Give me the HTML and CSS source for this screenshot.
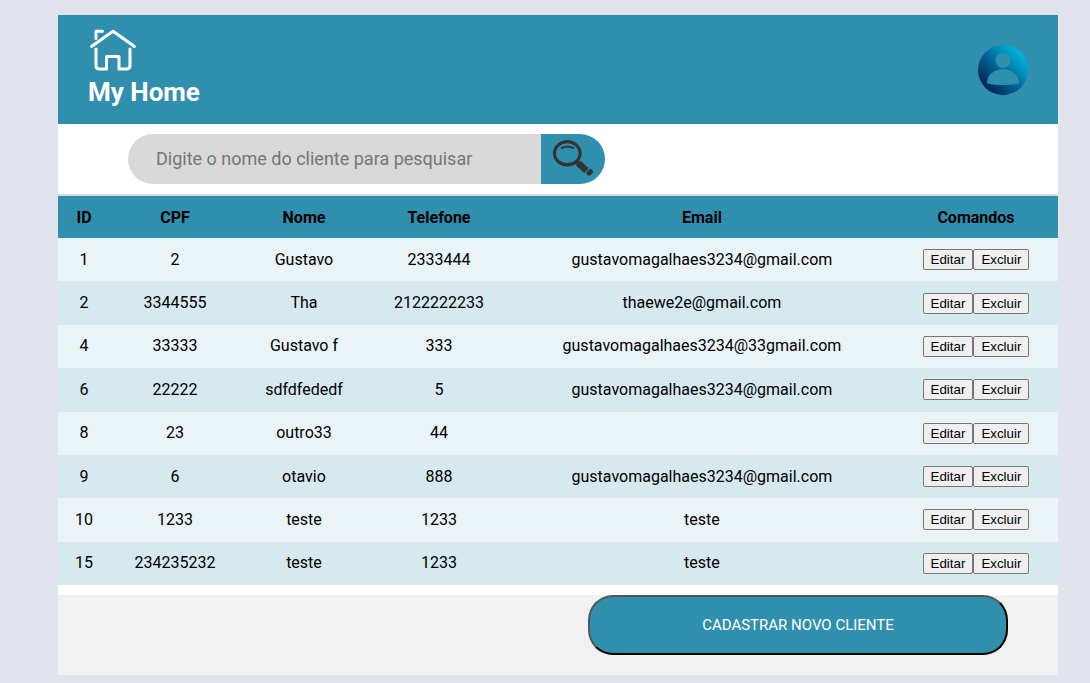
FILE: index.html
```html
<!DOCTYPE html>
<html lang="pt-BR">
<head>
<meta charset="utf-8">
<meta name="viewport" content="width=device-width, initial-scale=1">
<title>My Home</title>
<link rel="stylesheet" href="styles.css">
</head>
<body>
<div class="page">
  <header class="header">
    <div class="brand">
      <svg class="brand-icon" viewBox="0 0 48 44" fill="none" stroke="#fff" stroke-width="3" stroke-linecap="round" stroke-linejoin="round" aria-hidden="true">
        <path d="M2.500 18.500 24 3.200 45.500 18.500"/>
        <path d="M7 10.500V3.200H13.500"/>
        <path d="M7 21V37.500Q7 41 10.500 41H17.500V28.500H30V41H37Q41 41 41 37.500V21"/>
      </svg>
      <h1 class="brand-name">My Home</h1>
    </div>
    <svg class="avatar" viewBox="0 0 50 50" role="img" aria-label="Usuário">
      <defs>
        <linearGradient id="avatar-fill" x1="0.15" y1="0.85" x2="0.85" y2="0.15">
          <stop offset="0" stop-color="#022457"/>
          <stop offset="1" stop-color="#02b3dc"/>
        </linearGradient>
      </defs>
      <circle cx="25" cy="25" r="25" fill="url(#avatar-fill)"/>
      <circle cx="25" cy="15.500" r="7.500" fill="#318fae"/>
      <path d="M9 38.500C9 30 16 24.300 25 24.300S41 30 41 38.500Q25 41.500 9 38.500Z" fill="#318fae"/>
    </svg>
  </header>

  <form class="search">
    <input class="search-input" type="search" aria-label="Nome do cliente" placeholder="Digite o nome do cliente para pesquisar">
    <button class="search-button" type="button" aria-label="Pesquisar">
      <svg class="search-icon" viewBox="0 0 42 38" fill="none" stroke="#333" aria-hidden="true">
        <ellipse cx="15.300" cy="13.300" rx="12.800" ry="11.600" stroke-width="3.200"/>
        <path d="M9 8.500Q15.500 4.500 22 8.500" stroke-width="1.800"/>
        <path d="M24 21.500 27 24.500" stroke-width="3"/>
        <path d="M26 23 34.500 30.500" stroke-width="6.500"/>
        <path d="M37 32.800 38.400 31.800" stroke-width="5.200" stroke-linecap="round"/>
      </svg>
    </button>
  </form>

  <table class="clients">
    <colgroup>
      <col class="col-id"><col class="col-cpf"><col class="col-name"><col class="col-phone"><col class="col-email"><col class="col-actions">
    </colgroup>
    <thead>
      <tr><th>ID</th><th>CPF</th><th>Nome</th><th>Telefone</th><th>Email</th><th>Comandos</th></tr>
    </thead>
    <tbody>
      <tr><td>1</td><td>2</td><td>Gustavo</td><td>2333444</td><td>gustavomagalhaes3234@gmail.com</td><td><div class="actions"><button type="button">Editar</button><button type="button">Excluir</button></div></td></tr>
      <tr><td>2</td><td>3344555</td><td>Tha</td><td>2122222233</td><td>thaewe2e@gmail.com</td><td><div class="actions"><button type="button">Editar</button><button type="button">Excluir</button></div></td></tr>
      <tr><td>4</td><td>33333</td><td>Gustavo f</td><td>333</td><td>gustavomagalhaes3234@33gmail.com</td><td><div class="actions"><button type="button">Editar</button><button type="button">Excluir</button></div></td></tr>
      <tr><td>6</td><td>22222</td><td>sdfdfededf</td><td>5</td><td>gustavomagalhaes3234@gmail.com</td><td><div class="actions"><button type="button">Editar</button><button type="button">Excluir</button></div></td></tr>
      <tr><td>8</td><td>23</td><td>outro33</td><td>44</td><td></td><td><div class="actions"><button type="button">Editar</button><button type="button">Excluir</button></div></td></tr>
      <tr><td>9</td><td>6</td><td>otavio</td><td>888</td><td>gustavomagalhaes3234@gmail.com</td><td><div class="actions"><button type="button">Editar</button><button type="button">Excluir</button></div></td></tr>
      <tr><td>10</td><td>1233</td><td>teste</td><td>1233</td><td>teste</td><td><div class="actions"><button type="button">Editar</button><button type="button">Excluir</button></div></td></tr>
      <tr><td>15</td><td>234235232</td><td>teste</td><td>1233</td><td>teste</td><td><div class="actions"><button type="button">Editar</button><button type="button">Excluir</button></div></td></tr>
    </tbody>
  </table>

  <footer class="footer">
    <button class="new-client" type="button">CADASTRAR NOVO CLIENTE</button>
  </footer>
</div>
</body>
</html>
```
FILE: styles.css
```css
* {
  box-sizing: border-box;
}

body {
  margin: 0;
  padding: 15px 32px 8px 58px;
  background: #e1e4ed;
  color: #000;
  font-family: Roboto, sans-serif;
  font-size: 16px;
}

.page {
  background: #fff;
}

.header {
  display: flex;
  align-items: center;
  justify-content: space-between;
  padding: 13px 30px 12px;
  background: #318fae;
}

.brand-icon {
  display: block;
  width: 48px;
  height: 44px;
  margin-left: 1px;
}

.brand-name {
  margin: 0;
  color: #fff;
  font-size: 26px;
  font-weight: 700;
  line-height: 40px;
}

.avatar {
  width: 50px;
  height: 50px;
}

.search {
  display: flex;
  padding: 10px 70px;
  border-bottom: 2px solid #d9d9d9;
}

.search-input {
  width: 48%;
  height: 50px;
  padding: 0 28px 2px;
  border: 0;
  border-radius: 25px 0 0 25px;
  background: #d9d9d9;
  font-family: inherit;
  font-size: 18px;
}

.search-input::placeholder {
  color: #757575;
}

.search-button {
  width: 64px;
  height: 50px;
  padding: 0 0 0 11px;
  border: 0;
  border-radius: 0 25px 25px 0;
  background: #318fae;
}

.search-icon {
  display: block;
  width: 42px;
  height: 38px;
}

.clients {
  width: 100%;
  height: 389px;
  table-layout: fixed;
  border-collapse: collapse;
  text-align: center;
}

.col-id { width: 5.2%; }
.col-cpf { width: 13%; }
.col-name { width: 12.8%; }
.col-phone { width: 14.2%; }
.col-email { width: 38.4%; }
.col-actions { width: 16.4%; }

.clients th {
  height: 42px;
  padding: 0;
  background: #318fae;
  font-weight: 700;
}

.clients td {
  padding: 11px 0;
  background: #d6e9ee;
  line-height: 20px;
}

.clients tr:nth-child(odd) td {
  background: #eaf3f6;
}

.actions {
  display: flex;
  justify-content: center;
}

.actions button {
  height: 21px;
  padding: 1px 7px;
  border: 1px solid #767676;
  border-radius: 2px;
  background: #efefef;
  color: #000;
  font-family: "Liberation Sans", Arial, sans-serif;
}

.footer {
  display: flex;
  justify-content: flex-end;
  margin-top: 10px;
  padding: 0 50px 20px;
  background: #f1f1f1;
}

.new-client {
  width: 420px;
  height: 60px;
  border: 2px outset #000;
  border-radius: 25px;
  background: #318fae;
  color: #fff;
  font-family: inherit;
  font-size: 15px;
  font-weight: 400;
}
```
